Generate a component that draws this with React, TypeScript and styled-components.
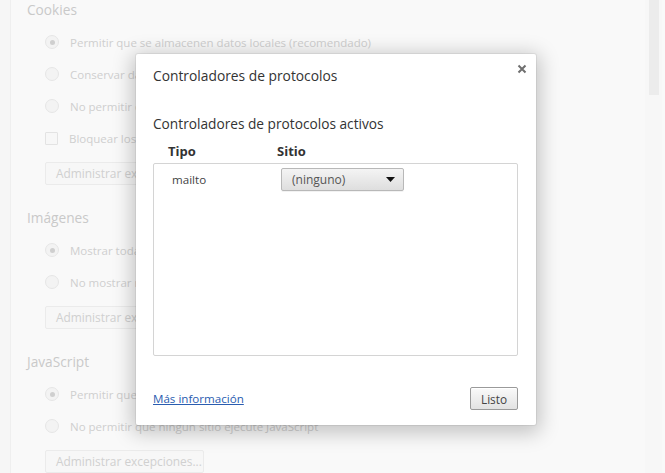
import React from "react";
import styled, { createGlobalStyle } from "styled-components";

const Global = createGlobalStyle`
  html, body { margin: 0; padding: 0; }
  body {
    width: 665px;
    height: 473px;
    overflow: hidden;
    background: #f9f9f9;
    font-family: "Open Sans", "Noto Sans", "Liberation Sans", sans-serif;
  }
`;

const Page = styled.div`
  position: relative;
  display: flex;
  width: 665px;
  height: 473px;
  overflow: hidden;
  background: #f9f9f9;
`;

const Sidebar = styled.div`
  width: 10px;
  flex: none;
  border-right: 1px solid #efefef;
  background: #f6f6f6;
`;

const Main = styled.div`
  flex: 1;
  padding-left: 16px;
  display: flex;
  flex-direction: column;
`;

const Section = styled.div`
  display: flex;
  flex-direction: column;
  margin-bottom: 23px;
`;

const SectionTitle = styled.div`
  height: 20px;
  line-height: 20px;
  font-size: 13.7px;
  color: #c9c9c9;
  margin-bottom: 6px;
`;

const Row = styled.div`
  height: 32px;
  display: flex;
  align-items: center;
  padding-left: 18px;
  gap: 11px;
  font-size: 11.5px;
  color: #cfcfcf;
  white-space: nowrap;
`;

const Radio = styled.span<{ $on?: boolean }>`
  width: 12px;
  height: 12px;
  border-radius: 50%;
  border: 1px solid #e6e6e6;
  background: #f3f3f3;
  display: flex;
  align-items: center;
  justify-content: center;
  flex: none;
  &::after {
    content: "";
    width: 5px;
    height: 5px;
    border-radius: 50%;
    background: ${(p) => (p.$on ? "#cfcfcf" : "transparent")};
  }
`;

const Check = styled.span`
  width: 11px;
  height: 11px;
  border: 1px solid #e3e3e3;
  background: #f7f7f7;
  border-radius: 1px;
  flex: none;
`;

const GhostButton = styled.div`
  margin-left: 18px;
  margin-top: 8px;
  height: 21px;
  width: 147px;
  box-sizing: content-box;
  border: 1px solid #ebebeb;
  border-radius: 2px;
  background: #f7f7f7;
  font-size: 11.9px;
  color: #d0d0d0;
  line-height: 21px;
  padding-left: 10px;
  white-space: nowrap;
`;

const Scroll = styled.div`
  width: 17px;
  margin-right: 3px;
  flex: none;
  background: #f7f7f7;
  display: flex;
  justify-content: center;
`;

const Thumb = styled.div`
  width: 10px;
  height: 95px;
  background: #ececec;
`;

const Dialog = styled.div`
  position: absolute;
  left: 136px;
  top: 54px;
  width: 400px;
  height: 371px;
  box-sizing: border-box;
  background: #fff;
  border-radius: 2px;
  box-shadow: 0 4px 20px 4px rgba(0, 0, 0, 0.22), 0 0 0 1px rgba(0, 0, 0, 0.06);
  display: flex;
  flex-direction: column;
  padding: 0 18px 15px 17px;
  color: #333;
`;

const Header = styled.div`
  display: flex;
  justify-content: space-between;
  align-items: flex-start;
  height: 44px;
  padding-top: 12px;
  box-sizing: border-box;
`;

const Title = styled.div`
  font-size: 13.8px;
  line-height: 20px;
  color: #333;
`;

const Close = styled.button`
  border: none;
  background: none;
  padding: 0;
  margin-top: -2px;
  margin-right: -9px;
  width: 10px;
  height: 10px;
  display: flex;
  cursor: pointer;
`;

const Subtitle = styled.div`
  margin-top: 16px;
  font-size: 13.7px;
  line-height: 20px;
  color: #333;
`;

const TableHead = styled.div`
  display: grid;
  grid-template-columns: 109px 1fr;
  padding-left: 15px;
  height: 22px;
  align-items: center;
  font-size: 13px;
  font-weight: 700;
  color: #333;
  margin-top: 6px;
  margin-bottom: 1px;
`;

const ListBox = styled.div`
  height: 193px;
  border: 1px solid #d4d4d4;
  border-radius: 2px;
  box-sizing: border-box;
  padding-top: 4px;
`;

const ListRow = styled.div`
  display: grid;
  grid-template-columns: 109px 1fr;
  padding-left: 18px;
  align-items: center;
  font-size: 11.6px;
  color: #444;
`;

const Select = styled.div`
  width: 123px;
  height: 23px;
  box-sizing: border-box;
  border: 1px solid #b8b8b8;
  border-radius: 2px;
  background: linear-gradient(#f4f4f4, #dedede);
  display: flex;
  align-items: center;
  justify-content: space-between;
  padding: 0 8px 0 10px;
  font-size: 12px;
  color: #555;
  box-shadow: 0 1px 0 rgba(0, 0, 0, 0.05);
`;

const Spacer = styled.div`
  flex: 1;
`;

const Footer = styled.div`
  display: flex;
  align-items: center;
  justify-content: space-between;
`;

const Link = styled.a`
  font-size: 11.6px;
  color: #2a5db0;
  text-decoration: underline;
  cursor: pointer;
`;

const Button = styled.button`
  width: 48px;
  height: 23px;
  border: 1px solid #9a9a9a;
  border-radius: 2px;
  background: linear-gradient(#fafafa, #e2e2e2);
  font-family: inherit;
  font-size: 11.8px;
  color: #444;
  padding: 0;
  box-shadow: inset 0 1px 0 #fff;
`;

type Item = { kind: "radio" | "check"; on?: boolean; label: string };

const sections: { title: string; items: Item[] }[] = [
  {
    title: "Cookies",
    items: [
      { kind: "radio", on: true, label: "Permitir que se almacenen datos locales (recomendado)" },
      { kind: "radio", label: "Conservar datos locales hasta que cierres el navegador" },
      { kind: "radio", label: "No permitir que se almacenen datos de los sitios" },
      { kind: "check", label: "Bloquear los datos de sitios y las cookies de terceros" },
    ],
  },
  {
    title: "Imágenes",
    items: [
      { kind: "radio", on: true, label: "Mostrar todas las imágenes (recomendado)" },
      { kind: "radio", label: "No mostrar ninguna imagen" },
    ],
  },
  {
    title: "JavaScript",
    items: [
      { kind: "radio", on: true, label: "Permitir que todos los sitios ejecuten JavaScript (recomendado)" },
      { kind: "radio", label: "No permitir que ningún sitio ejecute JavaScript" },
    ],
  },
];

export default function App() {
  return (
    <>
      <Global />
      <Page>
        <Sidebar />
        <Main>
          {sections.map((s) => (
            <Section key={s.title}>
              <SectionTitle>{s.title}</SectionTitle>
              {s.items.map((it) => (
                <Row key={it.label}>
                  {it.kind === "radio" ? <Radio $on={it.on} /> : <Check />}
                  <span>{it.label}</span>
                </Row>
              ))}
              <GhostButton>Administrar excepciones...</GhostButton>
            </Section>
          ))}
        </Main>
        <Scroll>
          <Thumb />
        </Scroll>

        <Dialog>
          <Header>
            <Title>Controladores de protocolos</Title>
            <Close aria-label="Cerrar">
              <svg width="10" height="10" viewBox="0 0 10 10">
                <path d="M1.5 1.5 L8.5 8.5 M8.5 1.5 L1.5 8.5" stroke="#6f6f6f" strokeWidth="2" />
              </svg>
            </Close>
          </Header>
          <Subtitle>Controladores de protocolos activos</Subtitle>
          <TableHead>
            <span>Tipo</span>
            <span>Sitio</span>
          </TableHead>
          <ListBox>
            <ListRow>
              <span>mailto</span>
              <Select>
                <span>(ninguno)</span>
                <svg width="9" height="5" viewBox="0 0 9 5">
                  <path d="M0 0 H9 L4.5 5 Z" fill="#111" />
                </svg>
              </Select>
            </ListRow>
          </ListBox>
          <Spacer />
          <Footer>
            <Link>Más información</Link>
            <Button>Listo</Button>
          </Footer>
        </Dialog>
      </Page>
    </>
  );
}
